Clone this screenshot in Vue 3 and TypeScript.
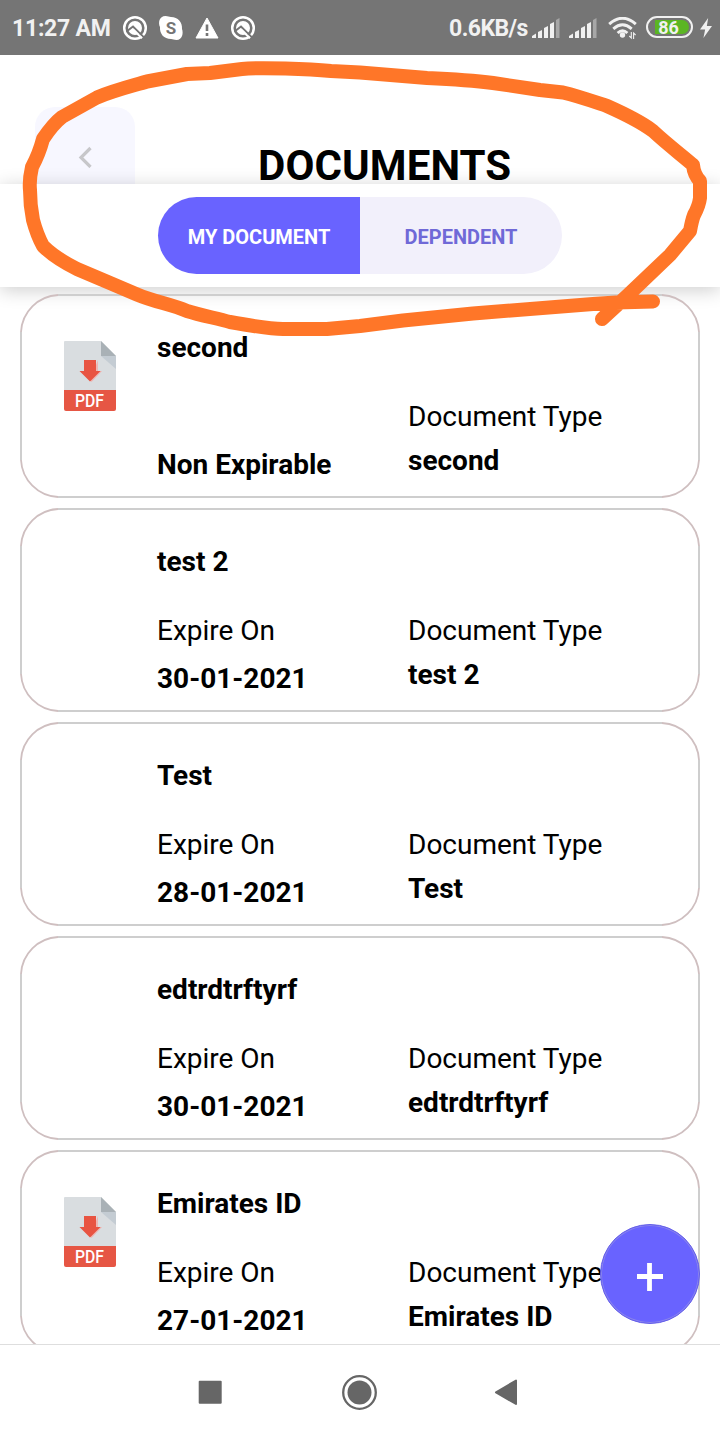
<script setup lang="ts">
interface DocumentCard {
  title: string
  expiry: string
  expires: boolean
  pdf: boolean
}

const documents: DocumentCard[] = [
  { title: 'second', expiry: 'Non Expirable', expires: false, pdf: true },
  { title: 'test 2', expiry: '30-01-2021', expires: true, pdf: false },
  { title: 'Test', expiry: '28-01-2021', expires: true, pdf: false },
  { title: 'edtrdtrftyrf', expiry: '30-01-2021', expires: true, pdf: false },
  { title: 'Emirates ID', expiry: '27-01-2021', expires: true, pdf: true },
]
const notices: string[] = ['ring', 'skype', 'warning', 'ring']
</script>

<template>
  <div class="screen">
    <div class="status">
      <span class="clock">11:27 AM</span>
      <div class="notices">
        <svg v-for="(kind, i) in notices" :key="i" width="26" height="26" viewBox="0 0 26 26">
          <g v-if="kind === 'ring'" fill="none">
            <circle cx="13" cy="13" r="10.8" stroke="#fff" stroke-width="2.500" />
            <circle cx="13" cy="13" r="7" fill="#fff" />
            <path d="M4.500 16.500 11 11.500 22.500 23" stroke="#757575" stroke-width="2" />
            <path d="M11.500 15 20 23.200" stroke="#fff" stroke-width="2" />
          </g>
          <g v-else-if="kind === 'skype'">
            <path d="M7.5 1C10 1 11 2 13 2C20 2 24.5 7 24 14C25.5 18 24.5 25 18.5 25C16 25 15 24 13 24C6 24 1.5 19 2 12C0 8 1 1 7.5 1Z" fill="#fff" />
            <text x="13" y="19.2" text-anchor="middle" class="skype-letter">S</text>
          </g>
          <g v-else>
            <path d="M13 3 24 23H2Z" fill="#fff" stroke="#fff" stroke-linejoin="round" />
            <path d="M13 9.5V16M13 18v3" stroke="#757575" stroke-width="2.6" />
          </g>
        </svg>
      </div>
      <span class="speed">0.6KB/s</span>
      <svg v-for="n in 2" :key="n" class="signal" width="28" height="20" viewBox="0 0 28 20">
        <path d="M0 20V18L4 15.5V20ZM6 20V14L10 12V20ZM12 20V10L16 8V20ZM18 20V6L22 4V20Z" fill="#f1f1f1" />
        <path d="M24 20V2L27.5 0V20Z" fill="#a7a7a7" />
      </svg>
      <svg class="wifi" width="29" height="23" viewBox="0 0 29 23">
        <path d="M1.2 7.2Q14.5-4.7 27.8 7.2M5.3 11.8Q14.5 3.8 23.7 11.8M9.6 16Q14.5 11.5 19.4 16" fill="none" stroke="#f1f1f1" stroke-width="2.9" />
        <circle cx="14.5" cy="18" r="2.7" fill="#f1f1f1" />
        <path d="M23.3 15v6l-2-2M25.6 22v-6l2 2" fill="none" stroke="#f1f1f1" stroke-width="1.1" />
      </svg>
      <div class="battery"><span class="charge">86</span></div>
      <svg class="bolt" width="12" height="20" viewBox="0 0 14 20" preserveAspectRatio="none">
        <path d="M9.5 0 0 11.5H6L4 20 14 8H8Z" fill="#f1f1f1" />
      </svg>
    </div>

    <header class="header">
      <button class="back" aria-label="Back">
        <svg width="14" height="22" viewBox="0 0 14 22">
          <path d="M12.500 2 3 11.500 12.500 21" fill="none" stroke="#c7c7ca" stroke-width="3.2" />
        </svg>
      </button>
      <h1>DOCUMENTS</h1>
    </header>

    <nav class="tabs">
      <button class="tab active"><span>MY DOCUMENT</span></button>
      <button class="tab"><span>DEPENDENT</span></button>
    </nav>

    <main class="list">
      <article v-for="doc in documents" :key="doc.title" class="card">
        <svg class="outline" width="680" height="204" viewBox="0 0 680 204">
          <path d="M1 38A39 39 0 0 1 38 1M642 1A39 39 0 0 1 679 38M679 166A39 39 0 0 1 642 203M38 203A39 39 0 0 1 1 166" class="corner" />
          <path d="M38 1H642M679 38V166M642 203H38M1 166V38" class="edge" />
        </svg>
        <div class="thumb">
          <svg v-if="doc.pdf" width="54" height="71" viewBox="0 0 54 71">
            <path d="M2 0H38L53 15V49H1V1Q1 0 2 0Z" fill="#d9dde0" />
            <path d="M38 15H53V28Z" fill="#c4ccd3" />
            <path d="M38 0 53 15H38Z" fill="#a9b1b6" />
            <path d="M35 19v11h4L28.500 41l-1.500-2Z" fill="#edb6b3" />
            <path d="M21 19H33V30H37.500L27 40.500 16.500 30H21Z" fill="#e85442" />
            <path d="M1 49H53V68Q53 70 51 70H3Q1 70 1 68Z" fill="#e65644" />
            <text x="12" y="66" textLength="29" lengthAdjust="spacingAndGlyphs" class="pdf-label">PDF</text>
          </svg>
        </div>
        <div class="column primary">
          <strong class="title">{{ doc.title }}</strong>
          <span class="label">{{ doc.expires ? 'Expire On' : '' }}</span>
          <strong class="expiry">{{ doc.expiry }}</strong>
        </div>
        <div class="column secondary">
          <span class="label">Document Type</span>
          <strong class="value">{{ doc.title }}</strong>
        </div>
      </article>
    </main>

    <footer class="system-nav">
      <svg width="24" height="24" viewBox="0 0 24 24"><rect x=".7" y=".7" width="23" height="23" rx="1" fill="#666" /></svg>
      <svg width="36" height="36" viewBox="0 0 36 36">
        <circle cx="17.500" cy="18.500" r="16.300" fill="none" stroke="#666" stroke-width="2.300" />
        <circle cx="17.500" cy="18.500" r="12" fill="#666" />
      </svg>
      <svg class="nav-back" width="24" height="28" viewBox="0 0 24 28"><path d="M22 2.500V26L2 14.300Z" fill="#666" stroke="#666" stroke-width="2" stroke-linejoin="round" /></svg>
    </footer>

    <button class="add" aria-label="Add document">
      <svg width="26" height="28" viewBox="0 0 26 28"><path d="M12.500 0V28M0 13.500H26" stroke="#fff" stroke-width="4.800" /></svg>
    </button>

    <svg class="annotation" width="720" height="350" viewBox="0 0 720 350">
      <path d="M602 319 627 296 670 255 690 231Q692 220 694 215 699 206 700 198L700 181Q694 175 693 165C684 157 668 145 653 131 640 121 625 114 607 106 592 101 578 96 563 92.500L540 90 493 83C470 80 450 79 427 78L360 72.500 331 71C310 69 260 67 242 69L210 73 187 74 147 81.500C132 86 115 90 97 97.500L62 117Q53 124 43 139 39 154 32 167 29 180 30 190 30 205 33 220 37 235 43 246 55 258 77 269L110 283 137 294.500C155 302 170 304 187 311 200 315 215 318 230 322 252 326 270 329 283 329H327L360 326 403 320.500 473 313.500 593 304 616 302.500 653 301.500" />
    </svg>
  </div>
</template>

<style>
body { margin: 0; background: #fff; }
</style>

<style scoped>
* { box-sizing: border-box; }
.screen {
  position: relative;
  display: flex;
  flex-direction: column;
  width: 720px;
  height: 1440px;
  overflow: hidden;
  background: #fff;
  color: #000;
  font-family: Roboto, "Liberation Sans", sans-serif;
}
svg { display: block; flex: none; }
button { border: 0; margin: 0; padding: 0; font-family: inherit; }
.status {
  display: flex;
  align-items: center;
  flex: none;
  height: 55px;
  padding-left: 12px;
  background: #757575;
  color: #f1f1f1;
  font-size: 23px;
  font-weight: 700;
}
.clock { width: 99px; padding-top: 2px; white-space: nowrap; letter-spacing: -.25px; }
.notices { display: flex; gap: 10px; margin-left: 11px; }
.skype-letter { font-size: 17px; font-weight: 700; fill: #757575; }
.speed { width: 80px; padding-top: 2px; margin-left: 193px; letter-spacing: -.55px; }
.signal { margin-left: 3px; }
.signal + .signal { margin-left: 9px; }
.wifi { margin-left: 11px; margin-top: 2px; }
.battery {
  flex: none;
  width: 47px;
  height: 22px;
  margin-left: 9px;
  margin-top: -1px;
  padding: 2px;
  border: 2px solid #f1f1f1;
  border-radius: 11px;
}
.charge {
  display: block;
  height: 14px;
  margin-left: 5px;
  padding-right: 7px;
  border-radius: 0 7px 7px 0;
  background: #5bb523;
  font-size: 18px;
  line-height: 15px;
  text-align: center;
}
.bolt { margin-left: 7px; }
.header {
  display: flex;
  align-items: flex-start;
  flex: none;
  height: 129px;
  padding-left: 35px;
}
.back {
  display: flex;
  justify-content: center;
  flex: none;
  width: 100px;
  height: 77px;
  margin-top: 52px;
  padding-top: 39px;
  border-radius: 20px 20px 0 0;
  background: #f7f7ff;
}
h1 {
  margin: 86px 0 0 123px;
  font-size: 42px;
  line-height: 50px;
  font-weight: 700;
  letter-spacing: .1px;
}
.tabs {
  position: relative;
  display: flex;
  justify-content: center;
  flex: none;
  height: 103px;
  padding: 13px 0;
  background: #fff;
  box-shadow: 0 3px 18px rgba(0, 0, 0, .2);
}
.tab {
  width: 202px;
  border-radius: 0 39px 39px 0;
  background: #f2f0fb;
  color: #7069d7;
  font-size: 20px;
  font-weight: 700;
  padding-top: 3px;
}
.tab.active {
  border-radius: 39px 0 0 39px;
  background: #6963ff;
  color: #fff;
}
.list {
  display: flex;
  flex-direction: column;
  gap: 10px;
  flex: none;
  height: 1057px;
  padding: 7px 20px 0;
  overflow: hidden;
}
.card {
  position: relative;
  display: flex;
  flex: none;
  height: 204px;
  padding: 2px;
  font-size: 28px;
  line-height: 32px;
}
.outline { position: absolute; inset: 0; fill: none; }
.edge { stroke: #cecece; stroke-width: 2px; }
.corner { stroke: #cfbfc0; stroke-width: 1.8px; }
.thumb { width: 135px; flex: none; padding: 45px 0 0 41px; }
.column { display: flex; flex-direction: column; white-space: nowrap; }
.column strong, .column span { height: 32px; }
.primary { width: 251px; padding-top: 36px; }
.primary .label { margin-top: 37px; }
.expiry { margin-top: 16px; }
.secondary { padding-top: 105px; }
.value { margin-top: 12px; }
strong { font-weight: 700; }
.pdf-label { font-size: 18px; font-weight: 500; fill: #fff; }
.system-nav {
  display: flex;
  align-items: center;
  justify-content: center;
  gap: 120px;
  flex: none;
  height: 96px;
  padding-bottom: 1px;
  border-top: 1px solid #dedede;
  background: #fff;
}
.nav-back { margin-left: -4px; margin-right: 4px; }
.add {
  position: absolute;
  left: 600px;
  top: 1224px;
  display: flex;
  align-items: center;
  justify-content: center;
  width: 100px;
  height: 100px;
  padding-top: 5px;
  border: 1px solid #6660e8;
  border-radius: 50%;
  background: #6963ff;
  box-shadow: inset 0 0 0 1px #8984ed;
}
.annotation { position: absolute; left: 0; top: 0; pointer-events: none; }
.annotation path {
  fill: none;
  stroke: #ff7628;
  stroke-width: 14px;
  stroke-linecap: round;
  stroke-linejoin: round;
}
</style>
